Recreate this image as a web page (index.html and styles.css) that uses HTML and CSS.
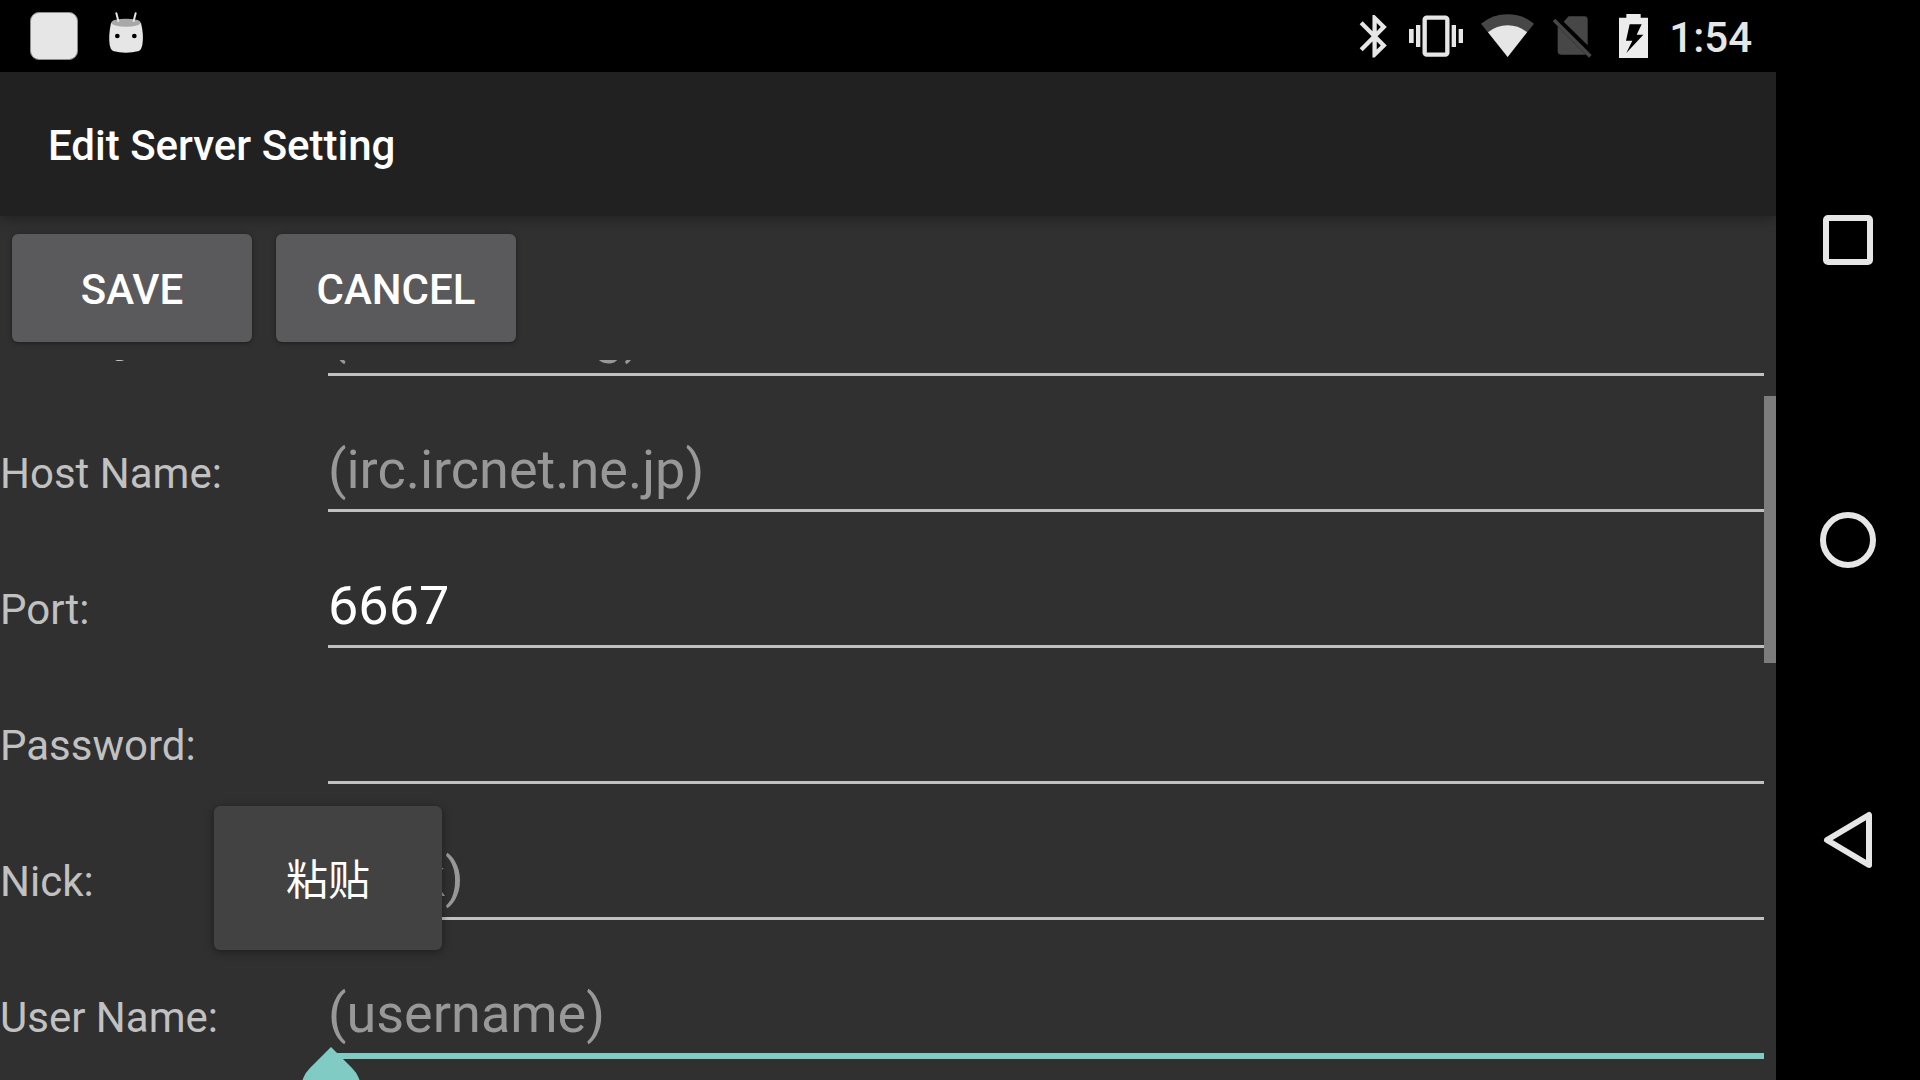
FILE: index.html
```html
<!DOCTYPE html>
<html lang="en">
<head>
<meta charset="utf-8">
<meta name="viewport" content="width=device-width, initial-scale=1">
<title>Edit Server Setting</title>
<link rel="stylesheet" href="styles.css">
</head>
<body>
<div class="app">
  <div class="status-bar">
    <div class="notifications">
      <span class="app-badge"></span>
      <svg class="robot" viewBox="306 36 144 144" aria-hidden="true">
        <path d="M333 69Q325 105 329 135Q331 148 339 153Q377 164 417 153Q425 148 427 135Q432 105 423 69Z" fill="#e6e6e6"/>
        <ellipse cx="378" cy="68" rx="44" ry="12" fill="#a8a8a8"/>
        <path d="M349 40l6 23M407 40l-6 23" stroke="#e6e6e6" stroke-width="6" stroke-linecap="round"/>
        <circle cx="352" cy="108" r="7"/><circle cx="403" cy="108" r="7"/>
      </svg>
    </div>
    <div class="system-icons">
      <svg class="icon-bluetooth" viewBox="48 0 108 216" aria-label="Bluetooth">
        <path transform="translate(27 32) scale(6.4)" fill="#e6e6e6" d="M17.71 7.71L12 2h-1v7.59L6.41 5 5 6.41 10.59 12 5 17.59 6.41 19 11 14.41V22h1l5.71-5.71-4.3-4.29 4.3-4.29zM13 5.83l1.88 1.88L13 9.59V5.83zm1.88 10.46L13 18.17v-3.76l1.88 1.88z"/>
      </svg>
      <svg class="icon-vibrate" viewBox="204 0 168 216" aria-label="Vibrate">
        <rect x="254" y="53" width="68" height="111" rx="6" fill="none" stroke="#e6e6e6" stroke-width="13"/>
        <path fill="#e6e6e6" d="M207 87h14v42h-14zM228 75h13v66h-13zM335 75h13v66h-13zM356 87h13v42h-13z"/>
      </svg>
      <svg class="icon-wifi" viewBox="420 0 165 216" aria-label="Wi-Fi">
        <path d="M503 171L423 71Q458 43 503 43T582 71Z" fill="#474747"/>
        <path d="M503 171L444 97Q470 76 503 76T561 97Z" fill="#e6e6e6"/>
      </svg>
      <svg class="icon-sim" viewBox="633 0 126 216" aria-label="No SIM">
        <path d="M686 49h47q10 0 10 10v77L671 65ZM653 79L738 164H663q-10 0-10-10Z" fill="#474747"/>
        <path d="M642 60L751 169" stroke="#474747" stroke-width="11"/>
      </svg>
      <svg class="icon-battery" viewBox="807 0 132 216" aria-label="Charging">
        <path fill="#ececec" fill-rule="evenodd" d="M859 42h43v11h22v121h-87V53h22ZM869 73L858 122H877L859 159L910 104H890L905 73Z"/>
      </svg>
      <time class="clock">1:54</time>
    </div>
  </div>

  <header class="title-bar"><h1>Edit Server Setting</h1></header>

  <form class="editor">
    <div class="actions">
      <button type="submit">SAVE</button>
      <button type="button">CANCEL</button>
    </div>
    <div class="scroll-area">
      <div class="fields">
        <div class="row">
          <label for="setting">Setting Name:</label>
          <input id="setting" type="text" placeholder="(new setting)">
        </div>
        <div class="row">
          <label for="host">Host Name:</label>
          <input id="host" type="text" placeholder="(irc.ircnet.ne.jp)">
        </div>
        <div class="row">
          <label for="port">Port:</label>
          <input id="port" type="text" value="6667">
        </div>
        <div class="row">
          <label for="password">Password:</label>
          <input id="password" type="password">
        </div>
        <div class="row">
          <label for="nick">Nick:</label>
          <input id="nick" type="text" placeholder="(nick)">
          <button class="paste-popup" type="button" lang="zh-CN">粘贴</button>
        </div>
        <div class="row">
          <label for="user">User Name:</label>
          <input id="user" class="active" type="text" placeholder="(username)">
          <svg class="caret-handle" viewBox="0 0 60 73" aria-hidden="true">
            <path d="M30 0L51 21A30 30 0 1 1 9 21Z" fill="#80cbc4"/>
          </svg>
        </div>
      </div>
      <span class="scroll-thumb"></span>
    </div>
  </form>
</div>

<nav class="nav-bar">
  <button type="button" aria-label="Recent apps">
    <svg viewBox="0 0 60 60"><rect x="8" y="8" width="44" height="44" rx="2"/></svg>
  </button>
  <button type="button" aria-label="Home">
    <svg viewBox="0 0 60 60"><circle cx="30" cy="30" r="25"/></svg>
  </button>
  <button type="button" aria-label="Back">
    <svg viewBox="0 0 60 60"><path d="M9 30L51 5V55Z"/></svg>
  </button>
</nav>
</body>
</html>
```
FILE: styles.css
```css
* { box-sizing: border-box; }

body {
  margin: 0;
  display: flex;
  height: 100vh;
  overflow: hidden;
  background: #000;
  color: #fff;
  font-family: Roboto, "Noto Sans CJK SC", sans-serif;
  font-size: 42px;
}

button, input { font: inherit; color: inherit; }
button { border: 0; padding: 0; }
svg { display: block; }

.app {
  flex: 1;
  min-width: 0;
  display: flex;
  flex-direction: column;
  background: #303030;
}

/* Status bar */
.status-bar {
  flex: none;
  height: 72px;
  padding: 0 24px 0 30px;
  display: flex;
  align-items: center;
  justify-content: space-between;
  background: #000;
}
.notifications { display: flex; gap: 24px; }
.app-badge {
  width: 48px;
  height: 48px;
  border: 1px solid #8c8c8c;
  border-radius: 9px;
  background: #e6e6e6;
}
.robot { width: 48px; height: 48px; }
.system-icons { display: flex; align-items: center; gap: 16px; }
.system-icons svg { height: 72px; }
.icon-bluetooth { width: 36px; }
.icon-vibrate { width: 56px; }
.icon-wifi { width: 55px; }
.icon-sim { width: 42px; }
.icon-battery { width: 44px; }
.clock { padding-top: 4px; color: #e6e6e6; font-weight: 500; line-height: 48px; }

/* Title */
.title-bar {
  flex: none;
  height: 144px;
  padding: 4px 48px 0;
  display: flex;
  align-items: center;
  background: #212121;
  box-shadow: 0 3px 12px rgba(0, 0, 0, .3);
}
.title-bar h1 { margin: 0; font-size: 42px; font-weight: 500; line-height: 48px; }

/* Form */
.editor {
  flex: 1;
  min-height: 0;
  display: flex;
  flex-direction: column;
}
.actions { flex: none; display: flex; gap: 24px; padding: 18px 12px; }
.actions button {
  width: 240px;
  height: 108px;
  padding-top: 2px;
  border-radius: 6px;
  background: #5a5a5c;
  font-weight: 500;
  box-shadow: 0 1px 5px rgba(0, 0, 0, .4);
}
.scroll-area {
  position: relative;
  flex: 1;
  min-height: 0;
  overflow: hidden;
}
.fields { margin-top: -120px; padding-right: 12px; }
.row {
  position: relative;
  height: 136px;
  display: flex;
  align-items: baseline;
}
.row label { flex: none; width: 328px; color: #c1c1c1; }
.row input {
  flex: 1;
  min-width: 0;
  height: 136px;
  padding: 61px 0 8px;
  border: 0;
  border-bottom: 3px solid #c1c1c1;
  border-radius: 0;
  outline: 0;
  background: transparent;
  font-size: 54px;
  line-height: 64px;
}
.row input::placeholder { color: #989898; opacity: 1; }
.row input.active { height: 139px; border-bottom: 6px solid #80cbc4; }

.paste-popup {
  position: absolute;
  z-index: 1;
  top: 22px;
  left: 214px;
  width: 228px;
  height: 144px;
  padding-bottom: 4px;
  border-radius: 6px;
  background: #424242;
  box-shadow: 0 2px 8px rgba(0, 0, 0, .4);
}
.caret-handle {
  position: absolute;
  top: 127px;
  left: 301px;
  width: 60px;
  height: 73px;
}
.scroll-thumb {
  position: absolute;
  top: 36px;
  right: 0;
  width: 12px;
  height: 267px;
  background: #7c7c7c;
}

/* System navigation */
.nav-bar {
  flex: none;
  width: 144px;
  padding: 90px 0;
  display: flex;
  flex-direction: column;
}
.nav-bar button {
  flex: 1;
  display: flex;
  align-items: center;
  justify-content: center;
  background: transparent;
}
.nav-bar svg {
  width: 60px;
  height: 60px;
  fill: none;
  stroke: #e6e6e6;
  stroke-width: 6;
  stroke-linejoin: round;
}
```
